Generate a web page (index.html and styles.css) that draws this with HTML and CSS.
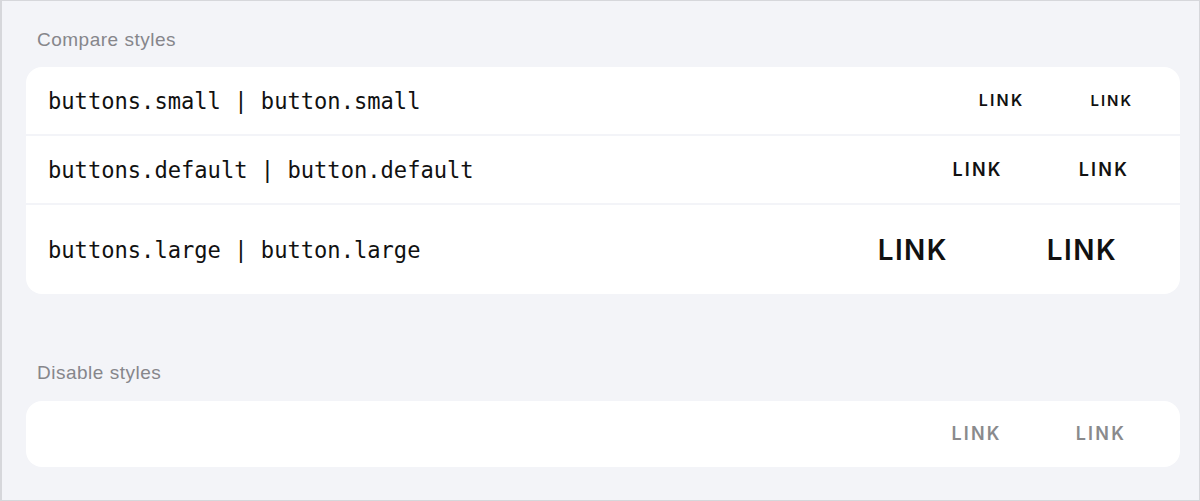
FILE: index.html
```html
<!DOCTYPE html>
<html lang="en">
<head>
<meta charset="utf-8">
<title>Buttons</title>
<link rel="stylesheet" href="styles.css">
</head>
<body>
<div class="page">
  <section class="group">
    <div class="group-label">Compare styles</div>
    <div class="card">
      <div class="row row-small">
        <span class="code">buttons.small | button.small</span>
        <div class="actions">
          <button class="link-btn s1">LINK</button>
          <button class="link-btn s2">LINK</button>
        </div>
      </div>
      <div class="row row-default">
        <span class="code">buttons.default | button.default</span>
        <div class="actions">
          <button class="link-btn d1">LINK</button>
          <button class="link-btn d1">LINK</button>
        </div>
      </div>
      <div class="row row-large">
        <span class="code">buttons.large | button.large</span>
        <div class="actions">
          <button class="link-btn l1">LINK</button>
          <button class="link-btn l1">LINK</button>
        </div>
      </div>
    </div>
  </section>
  <section class="group group-disabled">
    <div class="group-label">Disable styles</div>
    <div class="card">
      <div class="row row-disabled">
        <span class="code"></span>
        <div class="actions">
          <button class="link-btn d1 disabled" disabled>LINK</button>
          <button class="link-btn d1 disabled" disabled>LINK</button>
        </div>
      </div>
    </div>
  </section>
</div>
</body>
</html>
```
FILE: styles.css
```css
* { box-sizing: border-box; }
html, body { margin: 0; padding: 0; }
body { font-family: "Liberation Sans", Arial, sans-serif; color: #111; }

.page {
  width: 1200px;
  height: 501px;
  background: #f3f4f8;
  border: 1px solid #d6d7db;
  border-left-width: 2px;
  padding: 27px 19px 0 24px;
  display: flex;
  flex-direction: column;
}

.group-label {
  font-size: 19px;
  line-height: 24px;
  letter-spacing: 0.5px;
  color: #86868b;
  padding-left: 11px;
  margin-bottom: 15px;
}

.group-disabled { margin-top: 67px; }
.group-disabled .group-label { margin-bottom: 16px; }

.card {
  display: flex;
  flex-direction: column;
  gap: 2px;
  border-radius: 16px;
  overflow: hidden;
}

.row {
  background: #fff;
  display: flex;
  align-items: center;
  justify-content: space-between;
  padding: 0 24px 0 22px;
}
.row-small, .row-default { height: 67px; }
.row-large { height: 89px; padding-top: 3px; }
.row-disabled { height: 66px; padding-right: 27px; }

.code {
  font-family: "DejaVu Sans Mono", "Liberation Mono", monospace;
  font-size: 22.1px;
  color: #111;
}
.row-large .code { margin-top: -3px; }

.actions {
  display: flex;
  align-items: center;
  gap: 20px;
}
.row-default .actions { gap: 22px; }
.row-large .actions { gap: 21px; }

.link-btn {
  font-family: Inter, "Liberation Sans", Arial, sans-serif;
  font-weight: 600;
  color: #111;
  background: none;
  border: 0;
  margin: 0;
  line-height: 1.2;
  cursor: pointer;
}
.link-btn.s1 { font-size: 16px; letter-spacing: 2.2px; padding: 0 23px; }
.link-btn.s2 { font-size: 15px; letter-spacing: 2px; padding: 0 23px; }
.link-btn.d1 { font-size: 18px; letter-spacing: 2.2px; padding: 0 27px; }
.link-btn.l1 { font-size: 28px; letter-spacing: 1.4px; padding: 0 39px; }
.link-btn.disabled { color: #8a8a8c; cursor: default; }
```
